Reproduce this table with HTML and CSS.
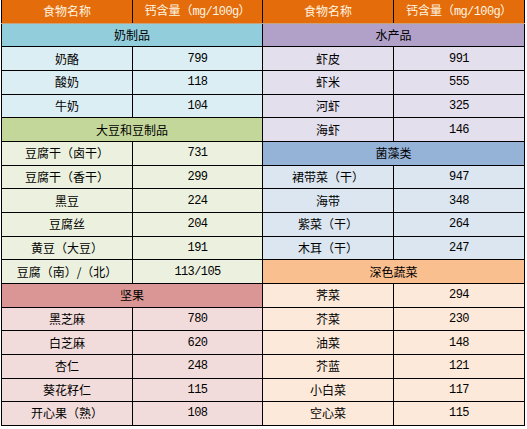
FILE: index.html
```html
<!DOCTYPE html>
<html lang="zh-CN">
<head>
<meta charset="utf-8">
<title>食物钙含量</title>
<link rel="stylesheet" href="styles.css">
</head>
<body>
<table class="ca">
<colgroup><col class="c1"><col class="c2"><col class="c3"><col class="c4"></colgroup>
<thead>
<tr class="head"><th>食物名称</th><th>钙含量（<span class="unit">mg/100g</span>）</th><th>食物名称</th><th>钙含量（<span class="unit">mg/100g</span>）</th></tr>
</thead>
<tbody>
<tr><td colspan="2" class="cat milk-h">奶制品</td><td colspan="2" class="cat sea-h">水产品</td></tr>
<tr><td class="milk">奶酪</td><td class="milk num">799</td><td class="sea">虾皮</td><td class="sea num">991</td></tr>
<tr><td class="milk">酸奶</td><td class="milk num">118</td><td class="sea">虾米</td><td class="sea num">555</td></tr>
<tr><td class="milk">牛奶</td><td class="milk num">104</td><td class="sea">河虾</td><td class="sea num">325</td></tr>
<tr><td colspan="2" class="cat bean-h">大豆和豆制品</td><td class="sea">海虾</td><td class="sea num">146</td></tr>
<tr><td class="bean">豆腐干（卤干）</td><td class="bean num">731</td><td colspan="2" class="cat alga-h">菌藻类</td></tr>
<tr><td class="bean">豆腐干（香干）</td><td class="bean num">299</td><td class="alga">裙带菜（干）</td><td class="alga num">947</td></tr>
<tr><td class="bean">黑豆</td><td class="bean num">224</td><td class="alga">海带</td><td class="alga num">348</td></tr>
<tr><td class="bean">豆腐丝</td><td class="bean num">204</td><td class="alga">紫菜（干）</td><td class="alga num">264</td></tr>
<tr><td class="bean">黄豆（大豆）</td><td class="bean num">191</td><td class="alga">木耳（干）</td><td class="alga num">247</td></tr>
<tr><td class="bean">豆腐（南）/（北）</td><td class="bean num">113/105</td><td colspan="2" class="cat veg-h">深色蔬菜</td></tr>
<tr><td colspan="2" class="cat nut-h">坚果</td><td class="veg">荠菜</td><td class="veg num">294</td></tr>
<tr><td class="nut">黑芝麻</td><td class="nut num">780</td><td class="veg">芥菜</td><td class="veg num">230</td></tr>
<tr><td class="nut">白芝麻</td><td class="nut num">620</td><td class="veg">油菜</td><td class="veg num">148</td></tr>
<tr><td class="nut">杏仁</td><td class="nut num">248</td><td class="veg">芥蓝</td><td class="veg num">121</td></tr>
<tr><td class="nut">葵花籽仁</td><td class="nut num">115</td><td class="veg">小白菜</td><td class="veg num">117</td></tr>
<tr><td class="nut">开心果（熟）</td><td class="nut num">108</td><td class="veg">空心菜</td><td class="veg num">115</td></tr>
</tbody>
</table>
</body>
</html>
```

FILE: styles.css
```css
html, body {
  margin: 0;
  padding: 0;
  background: #ffffff;
}

body {
  padding-left: 1px;
}

.ca {
  border-collapse: collapse;
  table-layout: fixed;
  width: 523px;
  margin-top: -1px;
  font-family: "Noto Sans CJK SC", "Liberation Sans", sans-serif;
  font-size: 12px;
  color: #000;
}

.c1 { width: 131px; }
.c2 { width: 130px; }
.c3 { width: 131px; }
.c4 { width: 131px; }

.ca th,
.ca td {
  border: 1px solid #000;
  padding: 0;
  text-align: center;
  vertical-align: middle;
  line-height: 14px;
  white-space: nowrap;
}

.ca tr {
  height: 23.67px;
}

.head th {
  background: #e46c0a;
  color: #fff6e4;
  font-weight: normal;
  border-bottom-color: #c8a27a;
}

.unit {
  font-family: "Liberation Mono", "DejaVu Sans Mono", monospace;
  font-size: 12px;
  letter-spacing: -0.6px;
}

.num {
  font-family: "Liberation Mono", "DejaVu Sans Mono", monospace;
  font-size: 12px;
  letter-spacing: -0.6px;
}

.milk-h { background: #92cddc; }
.milk { background: #dbeef3; }
.sea-h { background: #b1a0c7; }
.sea { background: #e4dfec; }
.bean-h { background: #c4d79b; }
.bean { background: #ebf1de; }
.alga-h { background: #95b3d7; }
.alga { background: #dce6f1; }
.nut-h { background: #da9694; }
.nut { background: #f2dcdb; }
.veg-h { background: #fabf8f; }
.veg { background: #fde9d9; }
```
